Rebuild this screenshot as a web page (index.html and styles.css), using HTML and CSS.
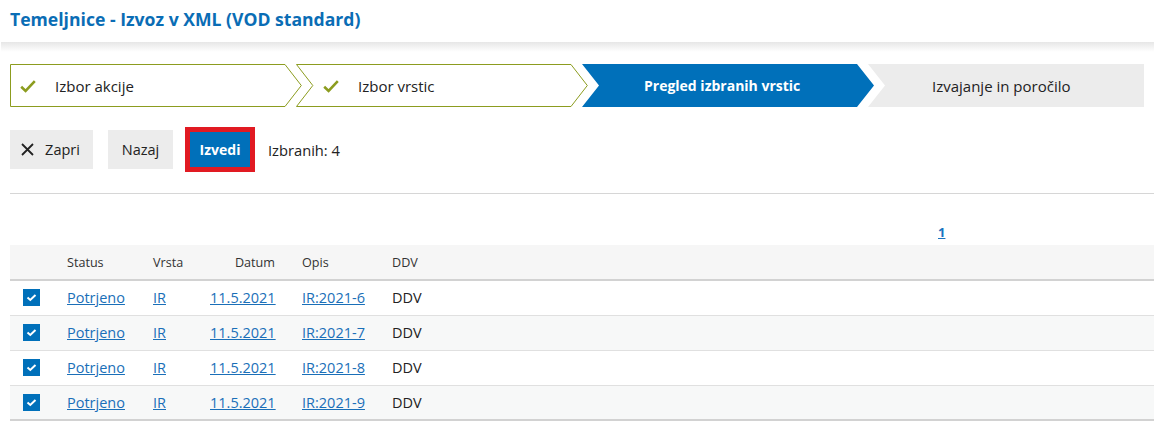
FILE: index.html
```html
<!DOCTYPE html>
<html lang="sl">
<head>
<meta charset="utf-8">
<title>Temeljnice - Izvoz v XML</title>
<link rel="stylesheet" href="styles.css">
</head>
<body>
<header class="top">
  <h1 class="title">Temeljnice - Izvoz v XML (VOD standard)</h1>
</header>
<div class="shadow"></div>
<main class="content">
  <div class="wizard">
    <div class="step step-done first">
      <svg class="step-bg" width="292" height="43" viewBox="0 0 292 43"><polygon points="0.5,0.5 275,0.5 291.3,21.5 275,42.5 0.5,42.5" fill="#fff" stroke="#8c9c1f" stroke-width="1"/></svg>
      <div class="step-label"><svg class="check" width="16" height="13" viewBox="0 0 16 13"><path d="M1.2 6.8 L5.6 11 L14.8 1.2" fill="none" stroke="#8c9c1f" stroke-width="2.6"/></svg>Izbor akcije</div>
    </div>
    <div class="step step-done">
      <svg class="step-bg" width="292" height="43" viewBox="0 0 292 43"><polygon points="0.5,0.5 275,0.5 291.3,21.5 275,42.5 0.5,42.5 16.8,21.5" fill="#fff" stroke="#8c9c1f" stroke-width="1"/></svg>
      <div class="step-label"><svg class="check" width="16" height="13" viewBox="0 0 16 13"><path d="M1.2 6.8 L5.6 11 L14.8 1.2" fill="none" stroke="#8c9c1f" stroke-width="2.6"/></svg>Izbor vrstic</div>
    </div>
    <div class="step step-active">
      <svg class="step-bg" width="292" height="43" viewBox="0 0 292 43"><polygon points="0,0 275,0 292,21.5 275,43 0,43 17,21.5" fill="#0070ba"/></svg>
      <div class="step-label">Pregled izbranih vrstic</div>
    </div>
    <div class="step step-todo">
      <svg class="step-bg" width="276" height="43" viewBox="0 0 276 43"><polygon points="0,0 276,0 276,43 0,43 17,21.5" fill="#ececec"/></svg>
      <div class="step-label">Izvajanje in poročilo</div>
    </div>
  </div>

  <div class="toolbar">
    <button class="btn btn-gray btn-close"><svg width="13" height="13" viewBox="0 0 13 13"><path d="M1 1 L12 12 M12 1 L1 12" stroke="#222" stroke-width="1.8"/></svg>Zapri</button>
    <button class="btn btn-gray btn-back">Nazaj</button>
    <span class="highlight"><button class="btn btn-primary">Izvedi</button></span>
    <span class="selected">Izbranih: 4</span>
  </div>

  <hr class="sep">

  <div class="pager"><a href="#">1</a></div>

  <table class="grid">
    <colgroup>
      <col class="c-chk"><col class="c-status"><col class="c-vrsta"><col class="c-datum"><col class="c-opis"><col>
    </colgroup>
    <thead>
      <tr><th></th><th>Status</th><th>Vrsta</th><th class="num">Datum</th><th>Opis</th><th>DDV</th></tr>
    </thead>
    <tbody>
      <tr><td><span class="cb"></span></td><td><a href="#">Potrjeno</a></td><td><a href="#">IR</a></td><td class="num"><a href="#">11.5.2021</a></td><td><a href="#">IR:2021-6</a></td><td>DDV</td></tr>
      <tr><td><span class="cb"></span></td><td><a href="#">Potrjeno</a></td><td><a href="#">IR</a></td><td class="num"><a href="#">11.5.2021</a></td><td><a href="#">IR:2021-7</a></td><td>DDV</td></tr>
      <tr><td><span class="cb"></span></td><td><a href="#">Potrjeno</a></td><td><a href="#">IR</a></td><td class="num"><a href="#">11.5.2021</a></td><td><a href="#">IR:2021-8</a></td><td>DDV</td></tr>
      <tr><td><span class="cb"></span></td><td><a href="#">Potrjeno</a></td><td><a href="#">IR</a></td><td class="num"><a href="#">11.5.2021</a></td><td><a href="#">IR:2021-9</a></td><td>DDV</td></tr>
    </tbody>
  </table>
</main>
</body>
</html>
```

FILE: styles.css
```css
* { box-sizing: border-box; }
html, body { margin: 0; padding: 0; background: #fff; }
body {
  font-family: "Open Sans", "Noto Sans", sans-serif;
  font-size: 14px;
  color: #222;
  width: 1154px;
  overflow: hidden;
}
.top {
  height: 42px;
  padding: 7px 10px 0;
}
.title {
  margin: 0;
  font-size: 17.6px;
  font-weight: 700;
  color: #0a6db5;
  line-height: 24px;
}
.shadow {
  height: 10px;
  margin-left: 1px;
  background: linear-gradient(#e6e6e6, #fff);
}
.content {
  padding: 12px 0 0 10px;
}
.wizard {
  display: flex;
  height: 43px;
}
.step {
  display: grid;
  width: 292px;
  height: 43px;
  margin-left: -6px;
}
.step.first { margin-left: 0; }
.step.step-todo { width: 276px; }
.step-bg, .step-label { grid-area: 1 / 1; }
.step-label {
  display: flex;
  align-items: center;
  height: 43px;
  line-height: 20px;
  font-size: 15px;
  position: relative;
}
.step-done.first .step-label { padding-left: 10px; }
.step-done:not(.first) .step-label { padding-left: 27px; }
.check { margin-right: 19px; margin-top: 1px; }
.step-active .step-label { padding-left: 62px; color: #fff; font-weight: 700; font-size: 14px; }
.step-todo .step-label { padding-left: 64px; color: #222; }

.toolbar {
  display: flex;
  align-items: center;
  margin-top: 20px;
  height: 45px;
}
.btn {
  font-family: inherit;
  font-size: 14.5px;
  border: 0;
  padding: 0;
  display: inline-flex;
  align-items: center;
  justify-content: center;
  cursor: pointer;
}
.btn-gray {
  background: #ececec;
  color: #222;
  height: 39px;
}
.btn-close { width: 83px; gap: 11px; padding-right: 2px; }
.btn-back { width: 65px; margin-left: 15px; }
.highlight {
  margin-left: 12px;
  border: 5px solid #e11a22;
  display: inline-flex;
}
.btn-primary {
  background: #0070ba;
  color: #fff;
  font-weight: 700;
  font-size: 14px;
  width: 60px;
  height: 35px;
}
.selected { margin-left: 13px; font-size: 14.7px; }

.sep {
  margin: 21px 0 0;
  border: 0;
  border-top: 1px solid #d6d6d6;
}
.pager {
  margin: 29px 0 0 928px;
  height: 22px;
  font-size: 13px;
  font-weight: 700;
}
.pager a { color: #1a73c0; }

.grid {
  width: 1144px;
  border-collapse: collapse;
  table-layout: fixed;
}
.c-chk { width: 47px; }
.c-status { width: 86px; }
.c-vrsta { width: 57px; }
.c-datum { width: 92px; }
.c-opis { width: 90px; }
.grid th {
  height: 35px;
  background: #f6f6f6;
  font-weight: 400;
  font-size: 12.6px;
  color: #333;
  text-align: left;
  padding: 0 10px;
  border-bottom: 2px solid #d2d2d2;
}
.grid td {
  height: 35px;
  padding: 0 10px;
  border-bottom: 1px solid #e0e0e0;
  color: #222;
  font-size: 14.5px;
}
.grid tbody tr:nth-child(even) td { background: #f7f8f8; }
.grid tbody tr:last-child td { border-bottom: 2px solid #d2d2d2; }
.grid .num { text-align: right; padding-right: 17px; }
.grid td:first-child { padding-left: 13px; }
.grid a { color: #1a6fb8; }
.cb {
  display: block;
  width: 17px;
  height: 17px;
  background: #0070ba url("data:image/svg+xml;utf8,<svg xmlns='http://www.w3.org/2000/svg' width='17' height='17'><path d='M4.5 8.5 L7.3 11 L12.5 6' fill='none' stroke='white' stroke-width='2'/></svg>") no-repeat center;
}
```
